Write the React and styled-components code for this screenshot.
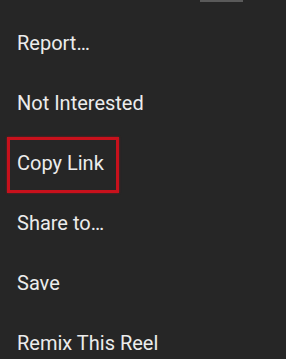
import React from "react";
import styled, { createGlobalStyle } from "styled-components";

const Global = createGlobalStyle`
  html, body { margin: 0; padding: 0; background: #262626; }
  body { font-family: Roboto, "Noto Sans", sans-serif; }
`;

const Sheet = styled.div`
  width: 286px;
  height: 359px;
  background: #262626;
  overflow: hidden;
  display: flex;
  flex-direction: column;
`;

const HandleRow = styled.div`
  display: flex;
  justify-content: flex-end;
  padding-right: 43px;
`;

const Handle = styled.div`
  width: 43px;
  height: 2px;
  background: #5a5a5a;
`;

const List = styled.ul`
  list-style: none;
  margin: 0;
  padding: 11px 0 0 0;
  display: flex;
  flex-direction: column;
`;

const Item = styled.li`
  position: relative;
  height: 60px;
  line-height: 60px;
  padding-left: 17px;
  font-size: 20px;
  color: #ececec;
  white-space: nowrap;
`;

const Highlight = styled.span`
  position: absolute;
  left: 7px;
  top: 4px;
  width: 112px;
  height: 56px;
  box-sizing: border-box;
  border: 3px solid #c8111c;
  box-shadow: 0 0 2px rgba(200, 17, 28, 0.6);
  pointer-events: none;
`;

const items = [
  { label: "Report…" },
  { label: "Not Interested" },
  { label: "Copy Link", highlighted: true },
  { label: "Share to…" },
  { label: "Save" },
  { label: "Remix This Reel" },
];

export default function App() {
  return (
    <>
      <Global />
      <Sheet>
        <HandleRow>
          <Handle />
        </HandleRow>
        <List>
          {items.map((it) => (
            <Item key={it.label}>
              {it.label}
              {it.highlighted && <Highlight />}
            </Item>
          ))}
        </List>
      </Sheet>
    </>
  );
}
